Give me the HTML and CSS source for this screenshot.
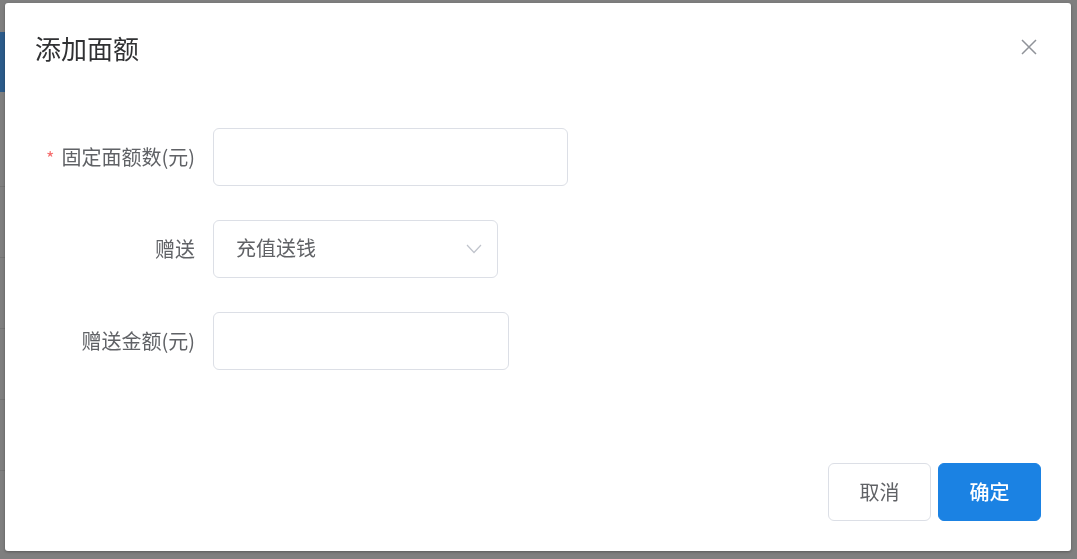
FILE: index.html
```html
<!DOCTYPE html>
<html lang="zh-CN">
<head>
<meta charset="utf-8">
<title>添加面额</title>
<link rel="stylesheet" href="styles.css">
</head>
<body>
<div class="page">
  <div class="page-side">
    <div class="side-btn"></div>
    <div class="side-row"></div>
    <div class="side-row"></div>
    <div class="side-row"></div>
    <div class="side-row"></div>
    <div class="side-row"></div>
  </div>
</div>
<div class="dialog">
  <div class="dialog-header">
    <span class="dialog-title">添加面额</span>
    <button class="dialog-close" aria-label="关闭">
      <svg width="16" height="16" viewBox="0 0 16 16"><path d="M1 1 L15 15 M15 1 L1 15" stroke="#909399" stroke-width="1.5" fill="none"/></svg>
    </button>
  </div>
  <div class="dialog-body">
    <div class="form-row">
      <label class="form-label"><span class="req">*</span>固定面额数(元)</label>
      <div class="input w1"></div>
    </div>
    <div class="form-row">
      <label class="form-label">赠送</label>
      <div class="input select w2">
        <span class="select-text">充值送钱</span>
        <svg class="chevron" width="16" height="10" viewBox="0 0 16 10"><path d="M1 1 L8 8.5 L15 1" stroke="#c0c4cc" stroke-width="1.2" fill="none"/></svg>
      </div>
    </div>
    <div class="form-row">
      <label class="form-label">赠送金额(元)</label>
      <div class="input w3"></div>
    </div>
  </div>
  <div class="dialog-footer">
    <button class="btn btn-default">取消</button>
    <button class="btn btn-primary">确定</button>
  </div>
</div>
</body>
</html>
```

FILE: styles.css
```css
html, body {
  margin: 0;
  padding: 0;
}
body {
  width: 1077px;
  height: 559px;
  background: #7f7f7f;
  overflow: hidden;
  font-family: "Noto Sans CJK SC", "Noto Sans", "Liberation Sans", sans-serif;
}
.page {
  height: 559px;
}
.page-side {
  width: 5px;
  padding-top: 32px;
}
.side-btn {
  height: 60px;
  background: #2b5b8a;
  margin-bottom: 94px;
}
.side-row {
  height: 70px;
  border-top: 1px solid #747474;
}
.dialog {
  position: fixed;
  left: 5px;
  top: 3px;
  width: 1066px;
  height: 548px;
  background: #fff;
  border-radius: 3px;
  box-shadow: 0 1px 3px rgba(0,0,0,0.3);
  display: flex;
  flex-direction: column;
  box-sizing: border-box;
}
.dialog-header {
  display: flex;
  align-items: center;
  justify-content: space-between;
  padding: 27px 34px 0 30px;
  height: 36px;
}
.dialog-title {
  font-size: 26px;
  line-height: 36px;
  color: #303133;
}
.dialog-close {
  border: 0;
  background: none;
  padding: 0;
  width: 16px;
  height: 16px;
  display: flex;
  margin-top: -3px;
}
.dialog-body {
  padding: 62px 29px 0 29px;
  display: flex;
  flex-direction: column;
  gap: 34px;
}
.form-row {
  display: flex;
  align-items: center;
  height: 58px;
}
.form-label {
  width: 179px;
  box-sizing: border-box;
  padding-right: 18px;
  text-align: right;
  font-size: 20px;
  color: #606266;
  line-height: 56px;
}
.req {
  color: #f56c6c;
  margin-right: 7px;
  font-size: 18px;
}
.input {
  height: 58px;
  box-sizing: border-box;
  border: 1px solid #dcdfe6;
  border-radius: 6px;
  background: #fff;
}
.w1 { width: 355px; }
.w2 { width: 285px; }
.w3 { width: 296px; }
.select {
  display: flex;
  align-items: center;
  justify-content: space-between;
  padding: 0 15px 0 22px;
}
.select-text {
  font-size: 20px;
  color: #606266;
  line-height: 24px;
  margin-top: -3px;
}
.chevron {
  margin-top: 0;
}
.dialog-footer {
  margin-top: auto;
  display: flex;
  justify-content: flex-end;
  gap: 7px;
  padding: 0 30px 30px 0;
}
.btn {
  width: 103px;
  height: 58px;
  border-radius: 6px;
  font-family: "Noto Sans CJK SC", "Noto Sans", sans-serif;
  font-size: 20px;
  box-sizing: border-box;
  padding: 0 0 2px 0;
}
.btn-default {
  background: #fff;
  border: 1px solid #dcdfe6;
  color: #606266;
}
.btn-primary {
  background: #1b82e3;
  border: 1px solid #1b82e3;
  color: #fff;
  font-weight: 500;
}
```
